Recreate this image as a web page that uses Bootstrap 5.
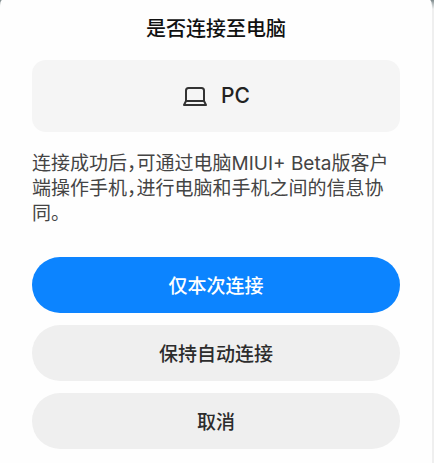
<!DOCTYPE html>
<html lang="zh-CN">
<head>
<meta charset="utf-8">
<meta name="viewport" content="width=device-width, initial-scale=1">
<title>是否连接至电脑</title>
<link href="https://cdn.jsdelivr.net/npm/bootstrap@5.3.0/dist/css/bootstrap.min.css" rel="stylesheet">
<style>
  body { background: linear-gradient(#7d898b 0, #b8bfc0 4px, #efefef 9px); font-family: "Noto Sans CJK SC", sans-serif; }
  .sheet { background: #fefefe; margin-right: 2px; border-radius: 2px 2px 0 0 / 8px 8px 0 0; padding: 13px 32px 14px; }
  .sheet-title { font-size: 20px; line-height: 30px; color: #111; font-weight: 500; }
  .device { background: #f5f5f5; border-radius: 14px; height: 72px; margin-top: 17px; gap: 13px; color: #222; }
  .device-name { font: 500 21px/30px Inter, sans-serif; }
  .sheet-text { font-family: Inter, "Noto Sans CJK SC", sans-serif; font-size: 19px; line-height: 25px; color: #444; margin: 19px 0 31px; font-feature-settings: "halt"; }
  .actions { gap: 12px; }
  .action { --bs-btn-font-size: 19px; --bs-btn-font-weight: 500; --bs-btn-border-width: 0; height: 56px;
    --bs-btn-bg: #efefef; --bs-btn-hover-bg: #e6e6e6; --bs-btn-active-bg: #ddd; --bs-btn-color: #2c2c2c; }
  .action-main { --bs-btn-bg: #0c84ff; --bs-btn-hover-bg: #0878ea; --bs-btn-active-bg: #066cd4;
    --bs-btn-color: #fff; --bs-btn-hover-color: #fff; --bs-btn-active-color: #fff; }
</style>
</head>
<body>
<main class="sheet min-vh-100">
  <h1 class="sheet-title text-center mb-0">是否连接至电脑</h1>
  <div class="device d-flex align-items-center justify-content-center">
    <svg width="26" height="22" viewBox="0 0 26 22" fill="none" stroke="#333" stroke-width="2" stroke-linejoin="round" aria-hidden="true">
      <path d="M4 16V5.500Q4 3 6.500 3H19.500Q22 3 22 5.500V16"/>
      <path d="M4 16H22L24 20H2Z"/>
    </svg>
    <span class="device-name">PC</span>
  </div>
  <p class="sheet-text">连接成功后，可通过电脑MIUI+ Beta版客户端操作手机，进行电脑和手机之间的信息协同。</p>
  <div class="actions d-grid">
    <button type="button" class="btn action action-main rounded-pill">仅本次连接</button>
    <button type="button" class="btn action rounded-pill">保持自动连接</button>
    <button type="button" class="btn action rounded-pill">取消</button>
  </div>
</main>
<script src="https://cdn.jsdelivr.net/npm/bootstrap@5.3.0/dist/js/bootstrap.bundle.min.js"></script>
</body>
</html>
